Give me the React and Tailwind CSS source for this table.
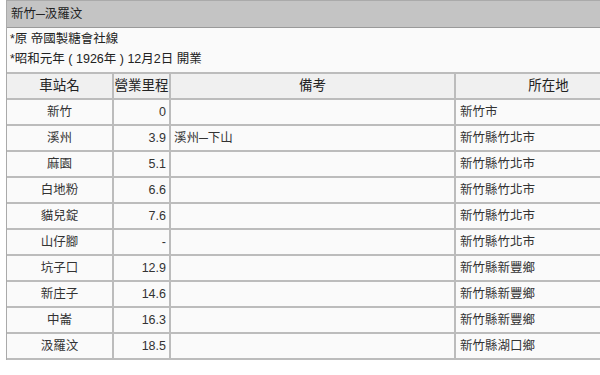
import React from "react";

const rows = [
  ["新竹", "0", "", "新竹市"],
  ["溪州", "3.9", "溪州─下山", "新竹縣竹北市"],
  ["麻園", "5.1", "", "新竹縣竹北市"],
  ["白地粉", "6.6", "", "新竹縣竹北市"],
  ["貓兒錠", "7.6", "", "新竹縣竹北市"],
  ["山仔腳", "-", "", "新竹縣竹北市"],
  ["坑子口", "12.9", "", "新竹縣新豐鄉"],
  ["新庄子", "14.6", "", "新竹縣新豐鄉"],
  ["中崙", "16.3", "", "新竹縣新豐鄉"],
  ["汲羅汶", "18.5", "", "新竹縣湖口鄉"],
];

export default function App() {
  const font = { fontFamily: '"Liberation Sans", "Noto Sans CJK TC", sans-serif' };
  return (
    <div className="w-[600px] h-[375px] bg-white overflow-hidden" style={font}>
      <div className="ml-[6px] w-[640px] border-l border-t border-[#aaa] bg-[#fafafa]">
        <div className="h-[27px] bg-[#c4c4c4] border-b border-[#9a9a9a] flex items-center pl-[4px] text-[12.5px] text-[#222]">
          新竹─汲羅汶
        </div>
        <div className="pl-[3px] pt-[1px] pb-[3px] text-[12.5px] leading-[20px] text-[#222] whitespace-nowrap">
          <div>*原 帝國製糖會社線</div>
          <div>*昭和元年 ( 1926年 ) 12月2日 開業</div>
        </div>
        <table className="table-fixed border-collapse w-[636px] text-[12.5px] text-[#333] whitespace-nowrap">
          <colgroup>
            <col className="w-[106px]" />
            <col className="w-[57px]" />
            <col className="w-[285px]" />
            <col />
          </colgroup>
          <thead>
            <tr className="h-[26px] bg-[#f0f0f0] text-[13.5px] text-[#222]">
              <th className="font-normal border-2 border-l-0 border-[#bcbcbc] text-center">車站名</th>
              <th className="font-normal border-2 border-[#bcbcbc] text-center p-0">營業里程</th>
              <th className="font-normal border-2 border-[#bcbcbc] text-center">備考</th>
              <th className="font-normal border-2 border-[#bcbcbc] text-center">所在地</th>
            </tr>
          </thead>
          <tbody>
            {rows.map((r, i) => (
              <tr key={i} className="h-[26px] bg-[#fafafa]">
                <td className="border-2 border-l-0 border-[#bcbcbc] text-center">{r[0]}</td>
                <td className="border-2 border-[#bcbcbc] text-right pr-[3px]">{r[1]}</td>
                <td className="border-2 border-[#bcbcbc] text-left pl-[3px]">{r[2]}</td>
                <td className="border-2 border-[#bcbcbc] text-left pl-[4px]">{r[3]}</td>
              </tr>
            ))}
          </tbody>
        </table>
      </div>
    </div>
  );
}
